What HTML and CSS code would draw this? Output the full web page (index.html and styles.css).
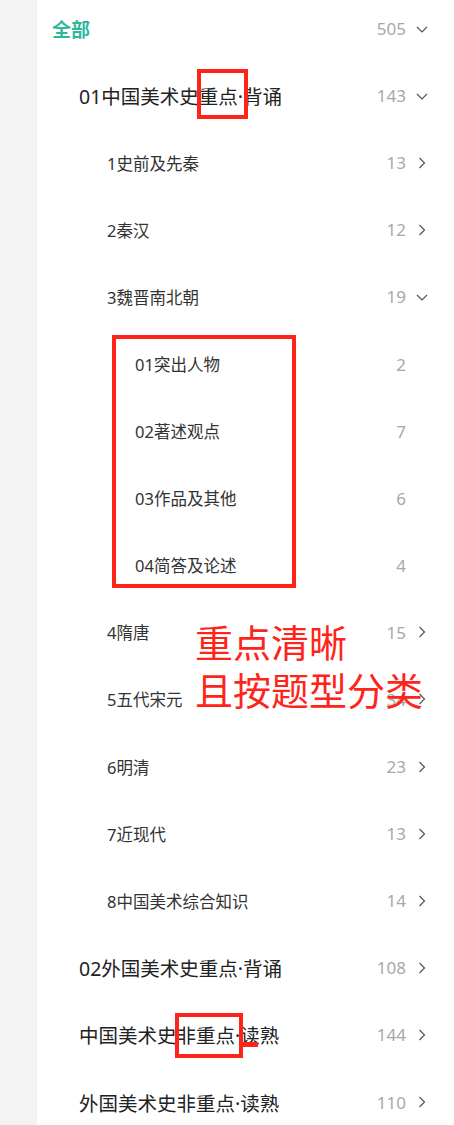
FILE: index.html
```html
<!DOCTYPE html>
<html lang="zh-CN">
<head>
    <meta charset="UTF-8">
    <meta name="viewport" content="width=device-width, initial-scale=1.0">
    <title>题库目录</title>
    <link rel="stylesheet" href="styles.css">
</head>
<body>
    <div class="page">
        <div class="rail"></div>
        <div class="tree">
            <div class="row root">
                <span class="label">全部</span>
                <span class="count">505</span>
                <svg class="arrow" viewBox="0 0 12 12"><polyline points="1,4 6,9 11,4"/></svg>
            </div>
            <div class="row lv1">
                <span class="label">01中国美术史重点·背诵</span>
                <span class="count">143</span>
                <svg class="arrow" viewBox="0 0 12 12"><polyline points="1,4 6,9 11,4"/></svg>
            </div>
            <div class="row lv2">
                <span class="label">1史前及先秦</span>
                <span class="count">13</span>
                <svg class="arrow" viewBox="0 0 12 12"><polyline points="3.5,1 8.5,6 3.5,11"/></svg>
            </div>
            <div class="row lv2">
                <span class="label">2秦汉</span>
                <span class="count">12</span>
                <svg class="arrow" viewBox="0 0 12 12"><polyline points="3.5,1 8.5,6 3.5,11"/></svg>
            </div>
            <div class="row lv2">
                <span class="label">3魏晋南北朝</span>
                <span class="count">19</span>
                <svg class="arrow" viewBox="0 0 12 12"><polyline points="1,4 6,9 11,4"/></svg>
            </div>
            <div class="row lv3">
                <span class="label">01突出人物</span>
                <span class="count">2</span>
                <span class="arrow"></span>
            </div>
            <div class="row lv3">
                <span class="label">02著述观点</span>
                <span class="count">7</span>
                <span class="arrow"></span>
            </div>
            <div class="row lv3">
                <span class="label">03作品及其他</span>
                <span class="count">6</span>
                <span class="arrow"></span>
            </div>
            <div class="row lv3">
                <span class="label">04简答及论述</span>
                <span class="count">4</span>
                <span class="arrow"></span>
            </div>
            <div class="row lv2">
                <span class="label">4隋唐</span>
                <span class="count">15</span>
                <svg class="arrow" viewBox="0 0 12 12"><polyline points="3.5,1 8.5,6 3.5,11"/></svg>
            </div>
            <div class="row lv2">
                <span class="label">5五代宋元</span>
                <span class="count">34</span>
                <svg class="arrow" viewBox="0 0 12 12"><polyline points="3.5,1 8.5,6 3.5,11"/></svg>
            </div>
            <div class="row lv2">
                <span class="label">6明清</span>
                <span class="count">23</span>
                <svg class="arrow" viewBox="0 0 12 12"><polyline points="3.5,1 8.5,6 3.5,11"/></svg>
            </div>
            <div class="row lv2">
                <span class="label">7近现代</span>
                <span class="count">13</span>
                <svg class="arrow" viewBox="0 0 12 12"><polyline points="3.5,1 8.5,6 3.5,11"/></svg>
            </div>
            <div class="row lv2">
                <span class="label">8中国美术综合知识</span>
                <span class="count">14</span>
                <svg class="arrow" viewBox="0 0 12 12"><polyline points="3.5,1 8.5,6 3.5,11"/></svg>
            </div>
            <div class="row lv1">
                <span class="label">02外国美术史重点·背诵</span>
                <span class="count">108</span>
                <svg class="arrow" viewBox="0 0 12 12"><polyline points="3.5,1 8.5,6 3.5,11"/></svg>
            </div>
            <div class="row lv1">
                <span class="label">中国美术史非重点·读熟</span>
                <span class="count">144</span>
                <svg class="arrow" viewBox="0 0 12 12"><polyline points="3.5,1 8.5,6 3.5,11"/></svg>
            </div>
            <div class="row lv1">
                <span class="label">外国美术史非重点·读熟</span>
                <span class="count">110</span>
                <svg class="arrow" viewBox="0 0 12 12"><polyline points="3.5,1 8.5,6 3.5,11"/></svg>
            </div>
        </div>

        <!-- annotations drawn over the list -->
        <div class="mark box-top"></div>
        <div class="mark box-group"></div>
        <div class="mark box-bottom"></div>
        <div class="mark tick"></div>
        <div class="note">重点清晰<br>且按题型分类</div>
    </div>
</body>
</html>
```

FILE: styles.css
```css
body {
    margin: 0;
    background-color: #ffffff;
    font-family: "Noto Sans", "Noto Sans CJK SC", sans-serif;
}
.page {
    position: relative;
    display: flex;
    width: 454px;
    height: 1125px;
    overflow: hidden;
}
.rail {
    width: 37px;
    flex-shrink: 0;
    background-color: #f3f3f3;
}
.tree {
    flex: 1;
    margin-top: -5px;
}
.row {
    display: flex;
    align-items: center;
    height: 67.1px;
    padding-right: 26px;
}
.label {
    flex: 1;
    white-space: nowrap;
}
.count {
    color: #a8a8a8;
    font-size: 17px;
    margin-right: 10px;
}
.arrow {
    width: 12px;
    height: 12px;
    fill: none;
    stroke: #555555;
    stroke-width: 1.2;
}
.root {
    padding-left: 15px;
}
.root .label {
    color: #2bb99a;
    font-size: 19px;
    font-weight: bold;
}
.lv1 {
    padding-left: 42px;
}
.lv1 .label {
    color: #222222;
    font-size: 19.5px;
}
.lv2 {
    padding-left: 70px;
}
.lv2 .label {
    color: #333333;
    font-size: 16.5px;
}
.lv3 {
    padding-left: 98px;
}
.lv3 .label {
    color: #333333;
    font-size: 16.5px;
}

.mark {
    position: absolute;
    border: 4px solid #ff2419;
    box-sizing: border-box;
}
.box-top {
    left: 197px;
    top: 69px;
    width: 51px;
    height: 50px;
}
.box-group {
    left: 112px;
    top: 335px;
    width: 184px;
    height: 253px;
}
.box-bottom {
    left: 175px;
    top: 1013px;
    width: 68px;
    height: 45px;
}
.tick {
    left: 241px;
    top: 1042px;
    width: 17px;
    height: 5px;
    border: none;
    background-color: #ff2419;
}
.note {
    position: absolute;
    left: 195px;
    top: 617px;
    color: #ff2419;
    font-family: "Noto Sans CJK SC", sans-serif;
    font-size: 38px;
    line-height: 48px;
    white-space: nowrap;
}
```
